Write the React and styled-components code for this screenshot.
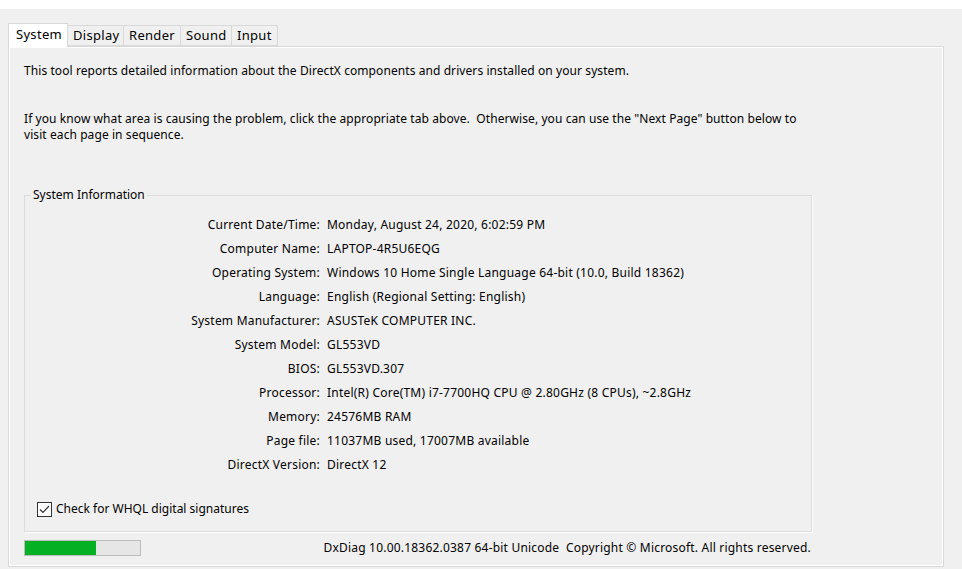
import React from 'react'
import styled, { createGlobalStyle } from 'styled-components'

const GlobalStyle = createGlobalStyle`
  html, body {
    margin: 0;
    padding: 0;
    background: #f0f0f0;
  }
  body {
    font-family: "Segoe UI", "Noto Sans", "Liberation Sans", sans-serif;
    font-size: 12px;
    color: #000;
  }
`

const info = [
  ['Current Date/Time:', 'Monday, August 24, 2020, 6:02:59 PM'],
  ['Computer Name:', 'LAPTOP-4R5U6EQG'],
  ['Operating System:', 'Windows 10 Home Single Language 64-bit (10.0, Build 18362)'],
  ['Language:', 'English (Regional Setting: English)'],
  ['System Manufacturer:', 'ASUSTeK COMPUTER INC.'],
  ['System Model:', 'GL553VD'],
  ['BIOS:', 'GL553VD.307'],
  ['Processor:', 'Intel(R) Core(TM) i7-7700HQ CPU @ 2.80GHz (8 CPUs), ~2.8GHz'],
  ['Memory:', '24576MB RAM'],
  ['Page file:', '11037MB used, 17007MB available'],
  ['DirectX Version:', 'DirectX 12'],
]

const tabs = [
  { name: 'System', w: 60 },
  { name: 'Display', w: 56 },
  { name: 'Render', w: 57 },
  { name: 'Sound', w: 51 },
  { name: 'Input', w: 46 },
]

const App = () => {
  return (
    <>
      <GlobalStyle />
      <Window>
        <TopStrip />
        <Body>
          <TabRow>
            {tabs.map((t, i) => (
              <Tab key={t.name} active={i === 0} w={t.w}>{t.name}</Tab>
            ))}
          </TabRow>
          <Panel>
            <Para>
              This tool reports detailed information about the DirectX components and drivers installed on your system.
            </Para>
            <Para className="second">
              If you know what area is causing the problem, click the appropriate tab above.&nbsp; Otherwise, you can use the "Next Page" button below to visit each page in sequence.
            </Para>
            <GroupBox>
              <Legend>System Information</Legend>
              <InfoGrid>
                {info.map(([k, v]) => (
                  <React.Fragment key={k}>
                    <Label>{k}</Label>
                    <Value>{v}</Value>
                  </React.Fragment>
                ))}
              </InfoGrid>
              <CheckRow>
                <CheckBox>
                  <svg width="11" height="9" viewBox="0 0 11 9">
                    <path d="M1 4.5 L4 7.5 L10 1" fill="none" stroke="#333" strokeWidth="1.2" />
                  </svg>
                </CheckBox>
                <span>Check for WHQL digital signatures</span>
              </CheckRow>
            </GroupBox>
            <StatusRow>
              <Progress>
                <ProgressFill style={{ width: '62%' }} />
              </Progress>
              <Footer>DxDiag 10.00.18362.0387 64-bit Unicode&nbsp; Copyright © Microsoft. All rights reserved.</Footer>
            </StatusRow>
          </Panel>
        </Body>
      </Window>
    </>
  )
}

export default App

const Window = styled.div`
  width: 962px;
  height: 569px;
  overflow: hidden;
  background: #f0f0f0;
`

const TopStrip = styled.div`
  height: 9px;
  background: #fff;
`

const Body = styled.div`
  padding: 14px 18px 0 8px;
`

const TabRow = styled.div`
  display: flex;
  align-items: flex-end;
  height: 23px;
`

const Tab = styled.div`
  box-sizing: border-box;
  width: ${p => p.w}px;
  height: ${p => (p.active ? '24px' : '21px')};
  margin-bottom: ${p => (p.active ? '-1px' : '0')};
  padding-left: ${p => (p.active ? '7px' : '5px')};
  border: 1px solid #d9d9d9;
  border-bottom: ${p => (p.active ? 'none' : '1px solid #d9d9d9')};
  border-left: ${p => (p.active ? '1px solid #d9d9d9' : 'none')};
  background: ${p => (p.active ? '#fff' : '#f0f0f0')};
  font-size: 13px;
  letter-spacing: 0.3px;
  line-height: ${p => (p.active ? '20px' : '19px')};
  position: relative;
  z-index: ${p => (p.active ? 2 : 1)};
  white-space: nowrap;
`

const Panel = styled.div`
  box-sizing: border-box;
  width: 936px;
  height: 521px;
  border: 1px solid #d9d9d9;
  box-shadow: inset 0 0 0 1px #fff;
  padding: 16px 15px 0 15px;
  display: flex;
  flex-direction: column;
`

const Para = styled.p`
  margin: 0;
  line-height: 16px;
  width: 790px;
  letter-spacing: 0.08px;
  &.second {
    margin-top: 32px;
  }
`

const GroupBox = styled.fieldset`
  box-sizing: border-box;
  margin: 45px 0 0 0;
  width: 788px;
  height: 344px;
  border: 1px solid #dcdcdc;
  box-shadow: 1px 1px 0 #fff;
  padding: 15px 0 0 12px;
  display: flex;
  flex-direction: column;
`

const Legend = styled.legend`
  padding: 0 2px;
  margin-left: -6px;
  font-size: 12px;
  line-height: 14px;
`

const InfoGrid = styled.div`
  display: grid;
  grid-template-columns: 283px 1fr;
  column-gap: 7px;
  row-gap: 8px;
  line-height: 16px;
  letter-spacing: 0.22px;
`

const Label = styled.div`
  text-align: right;
  white-space: nowrap;
`

const Value = styled.div`
  white-space: nowrap;
`

const CheckRow = styled.div`
  display: flex;
  align-items: center;
  gap: 4px;
  margin-top: 28px;
  line-height: 16px;
`

const CheckBox = styled.div`
  box-sizing: border-box;
  width: 15px;
  height: 15px;
  border: 1px solid #333;
  background: #fff;
  display: flex;
  align-items: center;
  justify-content: center;
`

const StatusRow = styled.div`
  display: flex;
  align-items: center;
  width: 788px;
  margin-top: 8px;
`

const Progress = styled.div`
  box-sizing: border-box;
  width: 117px;
  height: 16px;
  border: 1px solid #bcbcbc;
  background: #e6e6e6;
`

const ProgressFill = styled.div`
  height: 100%;
  background: #06b025;
`

const Footer = styled.div`
  margin-left: auto;
  margin-right: 1px;
  white-space: nowrap;
  line-height: 16px;
  letter-spacing: 0.2px;
`
